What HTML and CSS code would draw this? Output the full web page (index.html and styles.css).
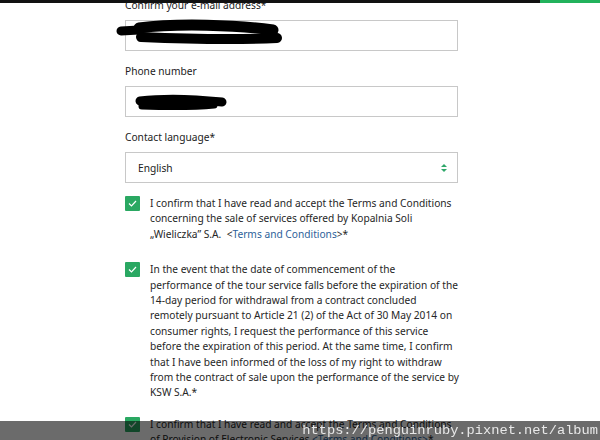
FILE: index.html
```html
<!DOCTYPE html>
<html lang="en">

<head>
    <meta charset="UTF-8">
    <meta name="viewport" content="width=device-width, initial-scale=1.0">
    <title>Order form</title>
    <link rel="stylesheet" href="styles.css">
</head>

<body>
    <div class="top-bar">
        <div class="top-bar-dark"></div>
        <div class="top-bar-green"></div>
    </div>

    <form class="order-form">
        <div class="field">
            <label class="field-label">Confirm your e-mail address*</label>
            <div class="input-wrap">
                <div class="text-input"></div>
                <svg class="scribble scribble-mail" width="170" height="30" viewBox="0 0 170 30">
                    <path d="M4 12 L22 11" stroke="#000" stroke-width="9" stroke-linecap="round" fill="none" />
                    <path d="M22 9 C60 4 120 6 156 11" stroke="#000" stroke-width="11" stroke-linecap="round" fill="none" />
                    <path d="M24 18 C70 20 120 21 160 19" stroke="#000" stroke-width="10" stroke-linecap="round" fill="none" />
                </svg>
            </div>
        </div>

        <div class="field">
            <label class="field-label">Phone number</label>
            <div class="input-wrap">
                <div class="text-input"></div>
                <svg class="scribble scribble-phone" width="100" height="20" viewBox="0 0 100 20">
                    <path d="M6 8 C30 5 60 6 88 9" stroke="#000" stroke-width="9" stroke-linecap="round" fill="none" />
                    <path d="M8 13 C40 14 60 14 80 12" stroke="#000" stroke-width="7" stroke-linecap="round" fill="none" />
                </svg>
            </div>
        </div>

        <div class="field">
            <label class="field-label">Contact language*</label>
            <div class="select-input">
                <span>English</span>
                <svg class="select-arrows" width="6" height="10" viewBox="0 0 6 10">
                    <path d="M0 4 L3 1 L6 4 Z" fill="#2fa86a" />
                    <path d="M0 6 L3 9 L6 6 Z" fill="#2fa86a" />
                </svg>
            </div>
        </div>

        <div class="consent consent-terms">
            <span class="check-box"><svg width="9" height="7" viewBox="0 0 9 7"><path d="M1 3.5 L3.5 6 L8 1" stroke="#fff" stroke-width="1.2" fill="none" /></svg></span>
            <p class="consent-text">I confirm that I have read and accept the Terms and Conditions concerning the sale of services offered by Kopalnia Soli „Wieliczka” S.A.&nbsp; &lt;<a href="#">Terms and Conditions</a>&gt;*</p>
        </div>

        <div class="consent">
            <span class="check-box"><svg width="9" height="7" viewBox="0 0 9 7"><path d="M1 3.5 L3.5 6 L8 1" stroke="#fff" stroke-width="1.2" fill="none" /></svg></span>
            <p class="consent-text">In the event that the date of commencement of the performance of the tour service falls before the expiration of the 14-day period for withdrawal from a contract concluded remotely pursuant to Article 21 (2) of the Act of 30 May 2014 on consumer rights, I request the performance of this service before the expiration of this period. At the same time, I confirm that I have been informed of the loss of my right to withdraw from the contract of sale upon the performance of the service by KSW S.A.*</p>
        </div>

        <div class="consent">
            <span class="check-box"><svg width="9" height="7" viewBox="0 0 9 7"><path d="M1 3.5 L3.5 6 L8 1" stroke="#fff" stroke-width="1.2" fill="none" /></svg></span>
            <p class="consent-text">I confirm that I have read and accept the Terms and Conditions of Provision of Electronic Services <a href="#">&lt;Terms and Conditions&gt;</a>*</p>
        </div>
    </form>

    <div class="watermark">https://penguinruby.pixnet.net/album</div>
</body>

</html>
```

FILE: styles.css
```css
body {
    margin: 0;
    font-family: 'Noto Sans', 'Open Sans', sans-serif;
    background-color: #fff;
    color: #2b2b2b;
    overflow: hidden;
    height: 440px;
}

.top-bar {
    display: flex;
    height: 3px;
    position: relative;
    z-index: 2;
}

.top-bar-dark {
    flex: 1;
    background-color: #111;
}

.top-bar-green {
    width: 60px;
    background-color: #22b25c;
}

.order-form {
    width: 333px;
    padding-left: 125px;
    margin-top: -5px;
}

.field {
    margin-bottom: 13px;
}

.field-label {
    display: block;
    font-size: 10.2px;
    line-height: 15px;
    margin-bottom: 7px;
    color: #222;
}

.input-wrap {
    position: relative;
}

.text-input,
.select-input {
    height: 29px;
    border: 1px solid #c8c8c8;
    background-color: #fff;
}

.select-input {
    display: flex;
    align-items: center;
    justify-content: space-between;
    padding: 0 10px 0 12px;
    font-size: 10.2px;
    color: #222;
}

.scribble {
    position: absolute;
    overflow: visible;
}

.scribble-mail {
    left: -8px;
    top: -1px;
}

.scribble-phone {
    left: 9px;
    top: 7px;
}

.consent {
    display: flex;
    gap: 10px;
    margin-bottom: 16px;
}

.consent-terms {
    margin-bottom: 20px;
}

.check-box {
    flex: none;
    width: 15px;
    height: 15px;
    background-color: #2aa862;
    border-radius: 1px;
    display: flex;
    align-items: center;
    justify-content: center;
}

.consent-text {
    margin: 0;
    margin-right: -2px;
    font-size: 10.2px;
    line-height: 15.4px;
    color: #262626;
}

.consent-text a {
    color: #2d5f9a;
    text-decoration: none;
}

.watermark {
    position: fixed;
    left: 0;
    right: 0;
    bottom: 0;
    height: 19px;
    background-color: rgba(0, 0, 0, 0.58);
    color: #e8e8e8;
    font-family: 'Liberation Mono', monospace;
    font-size: 13.7px;
    line-height: 19px;
    text-align: right;
    padding-right: 2px;
}
```
